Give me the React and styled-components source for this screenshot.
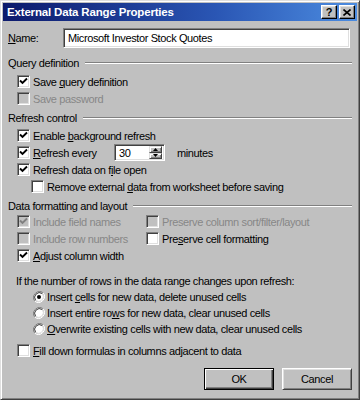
import React from 'react';
import styled, { createGlobalStyle } from 'styled-components';

const GlobalStyle = createGlobalStyle`
  html, body {
    margin: 0;
    padding: 0;
    background: #c0c0c0;
  }
`;

// Window frame
const Window = styled.div`
  width: 360px;
  height: 400px;
  box-sizing: border-box;
  background: #c0c0c0;
  border: 1px solid;
  border-color: #dfdfdf #404040 #404040 #dfdfdf;
  box-shadow: inset 1px 1px #ffffff, inset -1px -1px #808080;
  padding: 2px;
  display: flex;
  flex-direction: column;
  font-family: "Liberation Sans", Arial, sans-serif;
  font-size: 11px;
  letter-spacing: -0.38px;
  color: #000;
`;

const TitleBar = styled.div`
  height: 18px;
  display: flex;
  align-items: center;
  padding: 0 2px 0 4px;
  background: linear-gradient(to right, #0c1a6c 0%, #2a56b4 60%, #4c8ce0 100%);
`;

const Title = styled.span`
  flex: 1;
  color: #fff;
  font-weight: bold;
  font-size: 11.5px;
  letter-spacing: -0.17px;
`;

const CaptionButtons = styled.div`
  display: flex;
  gap: 2px;
`;

const CaptionButton = styled.div`
  width: 16px;
  height: 14px;
  box-sizing: border-box;
  background: #c0c0c0;
  border: 1px solid;
  border-color: #ffffff #000000 #000000 #ffffff;
  box-shadow: inset -1px -1px #808080, inset 1px 1px #dfdfdf;
  display: flex;
  align-items: center;
  justify-content: center;
  font-weight: bold;
  font-size: 11px;
  letter-spacing: 0;
  line-height: 1;
`;

const Body = styled.div`
  flex: 1;
  display: flex;
  flex-direction: column;
  padding: 0 5px 0 5px;
`;

const NameRow = styled.div`
  display: flex;
  align-items: center;
  margin: 7px 2px 0 0;
  height: 20px;
`;

const FieldLabel = styled.span`
  width: 55px;
`;

const TextField = styled.div`
  flex: 1;
  height: 20px;
  box-sizing: border-box;
  background: #fff;
  border: 1px solid;
  border-color: #808080 #ffffff #ffffff #808080;
  box-shadow: inset 1px 1px #404040, inset -1px -1px #dfdfdf;
  display: flex;
  align-items: center;
  padding-left: 4px;
`;

const GroupHeader = styled.div`
  display: flex;
  align-items: center;
  gap: 6px;
  height: 14px;
  margin-top: ${(p) => p.$gap || 8}px;

  &::after {
    content: '';
    flex: 1;
    height: 0;
    border-top: 1px solid #808080;
    border-bottom: 1px solid #ffffff;
  }
`;

const Row = styled.div`
  display: flex;
  align-items: center;
  gap: ${(p) => p.$spacing ?? 3}px;
  height: ${(p) => p.$h || 17}px;
  padding-left: ${(p) => p.$indent ?? 9}px;
  color: ${(p) => (p.$disabled ? '#878787' : '#000')};
`;

const Rows = styled.div`
  margin-top: ${(p) => p.$gap || 0}px;
`;

const Grid = styled.div`
  display: grid;
  grid-template-columns: 138px 1fr;
`;

const Box = styled.span`
  width: 13px;
  height: 13px;
  box-sizing: border-box;
  flex: none;
  background: ${(p) => (p.$disabled ? '#c0c0c0' : '#fff')};
  border: 1px solid;
  border-color: #808080 #ffffff #ffffff #808080;
  box-shadow: inset 1px 1px #404040, inset -1px -1px #dfdfdf;
  display: flex;
  align-items: center;
  justify-content: center;
`;

const Label = styled.span`
  white-space: nowrap;
  width: ${(p) => p.$width || 'auto'};
`;

const SpinField = styled.div`
  width: 51px;
  height: 17px;
  box-sizing: border-box;
  background: #fff;
  border: 1px solid;
  border-color: #808080 #ffffff #ffffff #808080;
  box-shadow: inset 1px 1px #404040, inset -1px -1px #dfdfdf;
  display: flex;
  align-items: center;
  padding: 1px 2px 1px 4px;
  margin-right: 9px;
`;

const SpinValue = styled.span`
  flex: 1;
`;

const SpinButtons = styled.div`
  display: flex;
  flex-direction: column;
  width: 13px;
  height: 13px;
`;

const SpinButton = styled.div`
  flex: 1;
  box-sizing: border-box;
  background: #c0c0c0;
  border: 1px solid;
  border-color: #dfdfdf #404040 #404040 #dfdfdf;
  box-shadow: inset 1px 1px #fff, inset -1px -1px #808080;
  display: flex;
  align-items: center;
  justify-content: center;
`;

const Paragraph = styled.div`
  height: 14px;
  display: flex;
  align-items: center;
  padding-left: 8px;
  margin-top: ${(p) => p.$gap || 0}px;
`;

const Footer = styled.div`
  display: flex;
  justify-content: flex-end;
  gap: 8px;
  margin-top: 9px;
`;

const Button = styled.div`
  width: 70px;
  height: 22px;
  box-sizing: border-box;
  display: flex;
  align-items: center;
  justify-content: center;
  background: #c0c0c0;
  border: 1px solid;
  border-color: ${(p) => (p.$default ? '#000' : '#ffffff #404040 #404040 #ffffff')};
  box-shadow: ${(p) =>
    p.$default
      ? 'inset 1px 1px #fff, inset -1px -1px #404040, inset -2px -2px #808080'
      : 'inset 1px 1px #dfdfdf, inset -1px -1px #808080'};
`;

function Check({ color = '#000' }) {
  return (
    <svg width="9" height="9" viewBox="0 0 9 9">
      <path d="M1 3.5 L3.5 6 L8 1.5" fill="none" stroke={color} strokeWidth="1.9" />
    </svg>
  );
}

function CheckBox({ checked, disabled }) {
  return (
    <Box $disabled={disabled}>
      {checked && <Check color={disabled ? '#808080' : '#000'} />}
    </Box>
  );
}

function Radio({ checked }) {
  return (
    <svg width="12" height="12" viewBox="0 0 12 12" style={{ flex: 'none' }}>
      <path d="M10.2 1.8 A6 6 0 0 0 1.8 10.2" fill="none" stroke="#808080" strokeWidth="1" />
      <path d="M1.8 10.2 A6 6 0 0 0 10.2 1.8" fill="none" stroke="#fff" strokeWidth="1" />
      <circle cx="6" cy="6" r="4.6" fill="#fff" />
      <path d="M9.3 2.7 A4.7 4.7 0 0 0 2.7 9.3" fill="none" stroke="#404040" strokeWidth="1" />
      <path d="M2.7 9.3 A4.7 4.7 0 0 0 9.3 2.7" fill="none" stroke="#dfdfdf" strokeWidth="1" />
      {checked && <circle cx="6" cy="6" r="2" fill="#000" />}
    </svg>
  );
}

function Arrow({ up }) {
  return (
    <svg width="5" height="3" viewBox="0 0 5 3">
      <path d={up ? 'M0 3 L2.5 0 L5 3 Z' : 'M0 0 L5 0 L2.5 3 Z'} fill="#000" />
    </svg>
  );
}

function CheckRow({ checked, disabled, indent, children }) {
  return (
    <Row $indent={indent} $disabled={disabled}>
      <CheckBox checked={checked} disabled={disabled} />
      <Label>{children}</Label>
    </Row>
  );
}

function RadioRow({ checked, children }) {
  return (
    <Row $indent={25} $h={16} $spacing={2}>
      <Radio checked={checked} />
      <Label>{children}</Label>
    </Row>
  );
}

export default function App() {
  return (
    <>
      <GlobalStyle />
      <Window>
        <TitleBar>
          <Title>External Data Range Properties</Title>
          <CaptionButtons>
            <CaptionButton>?</CaptionButton>
            <CaptionButton>
              <svg width="8" height="7" viewBox="0 0 8 7">
                <path d="M0.5 0.5 L7.5 6.5 M7.5 0.5 L0.5 6.5" stroke="#000" strokeWidth="1.6" />
              </svg>
            </CaptionButton>
          </CaptionButtons>
        </TitleBar>

        <Body>
          <NameRow>
            <FieldLabel><u>N</u>ame:</FieldLabel>
            <TextField>Microsoft Investor Stock Quotes</TextField>
          </NameRow>

          <GroupHeader>Query definition</GroupHeader>
          <Rows $gap={3}>
            <CheckRow checked>Save <u>q</u>uery definition</CheckRow>
            <CheckRow disabled>Save password</CheckRow>
          </Rows>

          <GroupHeader $gap={4}>Refresh control</GroupHeader>
          <Rows $gap={2}>
            <CheckRow checked>Enable <u>b</u>ackground refresh</CheckRow>
            <Row>
              <CheckBox checked />
              <Label $width="78px"><u>R</u>efresh every</Label>
              <SpinField>
                <SpinValue>30</SpinValue>
                <SpinButtons>
                  <SpinButton><Arrow up /></SpinButton>
                  <SpinButton><Arrow /></SpinButton>
                </SpinButtons>
              </SpinField>
              <Label>minutes</Label>
            </Row>
            <CheckRow checked>Refresh data on f<u>i</u>le open</CheckRow>
            <CheckRow indent={23}>Remove external <u>d</u>ata from worksheet before saving</CheckRow>
          </Rows>

          <GroupHeader $gap={4}>Data formatting and layout</GroupHeader>
          <Grid>
            <CheckRow checked disabled>Include field names</CheckRow>
            <CheckRow disabled indent={0}>Preserve column sort/filter/layout</CheckRow>
            <CheckRow disabled>Include row numbers</CheckRow>
            <CheckRow indent={0}>Pre<u>s</u>erve cell formatting</CheckRow>
            <CheckRow checked><u>A</u>djust column width</CheckRow>
          </Grid>

          <Paragraph $gap={10}>If the number of rows in the data range changes upon refresh:</Paragraph>
          <Rows $gap={1}>
            <RadioRow checked>Insert <u>c</u>ells for new data, delete unused cells</RadioRow>
            <RadioRow>Insert entire ro<u>w</u>s for new data, clear unused cells</RadioRow>
            <RadioRow><u>O</u>verwrite existing cells with new data, clear unused cells</RadioRow>
          </Rows>

          <Rows $gap={5}>
            <CheckRow><u>F</u>ill down formulas in columns adjacent to data</CheckRow>
          </Rows>

          <Footer>
            <Button $default>OK</Button>
            <Button>Cancel</Button>
          </Footer>
        </Body>
      </Window>
    </>
  );
}
